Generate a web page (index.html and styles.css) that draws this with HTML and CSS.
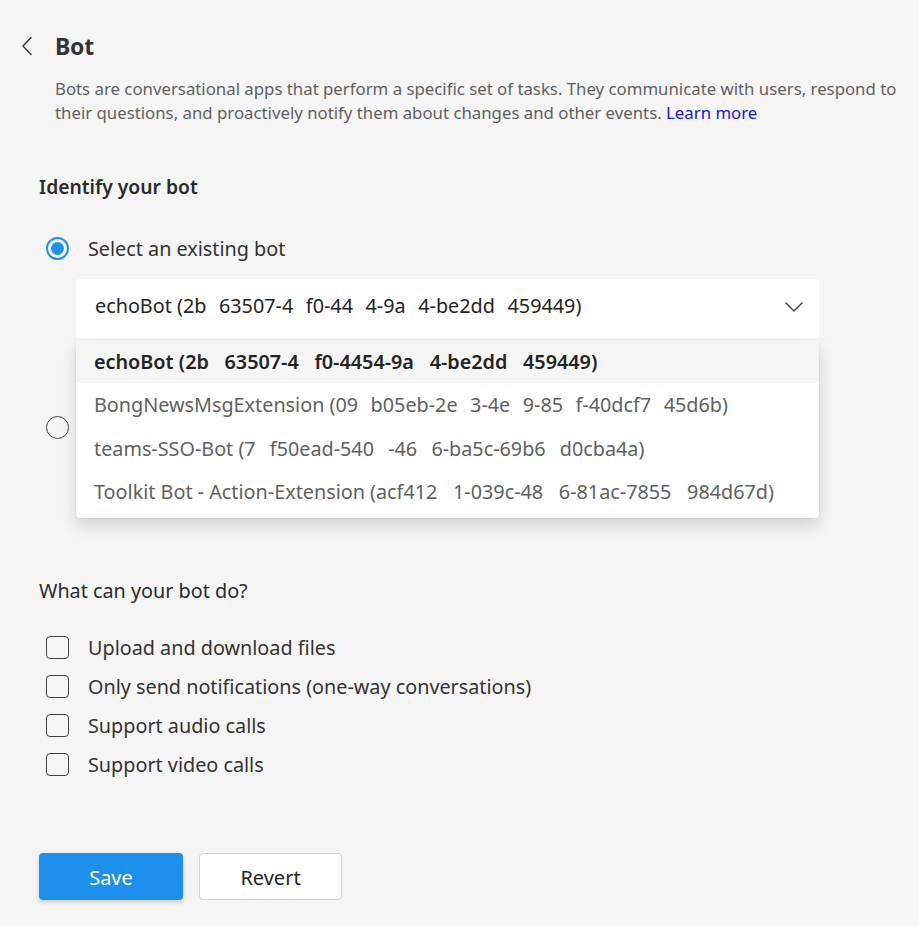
FILE: index.html
```html
<!DOCTYPE html>
<html>
<head>
<meta charset="utf-8">
<link rel="stylesheet" href="styles.css">
</head>
<body>
<div class="page">
  <header class="header">
    <button class="back" aria-label="Back">
      <svg width="12" height="20" viewBox="0 0 12 20"><path d="M10 1.5 L2 10 L10 18.5" fill="none" stroke="#424242" stroke-width="1.6" stroke-linecap="round" stroke-linejoin="round"/></svg>
    </button>
    <h1 class="title">Bot</h1>
  </header>
  <p class="desc">Bots are conversational apps that perform a specific set of tasks. They communicate with users, respond to<br>their questions, and proactively notify them about changes and other events. <a class="link" href="#">Learn more</a></p>

  <section class="section identify">
    <h2 class="h2 strong">Identify your bot</h2>
    <div class="radios">
      <div class="radio-row">
        <span class="radio checked"><span class="dot"></span></span>
        <span class="label">Select an existing bot</span>
      </div>
      <div class="select-wrap">
        <div class="select">
          <span class="select-text">echoBot (2b<span class="g13"></span>63507-4<span class="g13"></span>f0-44<span class="g13"></span>4-9a<span class="g13"></span>4-be2dd<span class="g13"></span>459449)</span>
          <svg class="chev" width="18" height="10" viewBox="0 0 18 10"><path d="M1 1 L9 9 L17 1" fill="none" stroke="#424242" stroke-width="1.4" stroke-linecap="round" stroke-linejoin="round"/></svg>
        </div>
        <ul class="menu">
          <li class="item active">echoBot (2b<span class="g16"></span>63507-4<span class="g16"></span>f0-4454-9a<span class="g16"></span>4-be2dd<span class="g16"></span>459449)</li>
          <li class="item">BongNewsMsgExtension (09<span class="g12"></span>b05eb-2e<span class="g12"></span>3-4e<span class="g12"></span>9-85<span class="g12"></span>f-40dcf7<span class="g12"></span>45d6b)</li>
          <li class="item">teams-SSO-Bot (7<span class="g14"></span>f50ead-540<span class="g14"></span>-46<span class="g14"></span>6-ba5c-69b6<span class="g14"></span>d0cba4a)</li>
          <li class="item">Toolkit Bot - Action-Extension (acf412<span class="g16"></span>1-039c-48<span class="g16"></span>6-81ac-7855<span class="g16"></span>984d67d)</li>
        </ul>
      </div>
      <div class="radio-row second">
        <span class="radio"></span>
      </div>
    </div>
  </section>

  <section class="section can">
    <h2 class="h2">What can your bot do?</h2>
    <div class="checks">
      <label class="check-row"><span class="box"></span><span class="label">Upload and download files</span></label>
      <label class="check-row"><span class="box"></span><span class="label">Only send notifications (one-way conversations)</span></label>
      <label class="check-row"><span class="box"></span><span class="label">Support audio calls</span></label>
      <label class="check-row"><span class="box"></span><span class="label">Support video calls</span></label>
    </div>
  </section>

  <div class="actions">
    <button class="btn primary">Save</button>
    <button class="btn secondary">Revert</button>
  </div>
</div>
</body>
</html>
```
FILE: styles.css
```css
* { box-sizing: border-box; }
html, body { margin: 0; padding: 0; }
body {
  background: #f5f5f5;
  font-family: "Noto Sans", "Open Sans", sans-serif;
  color: #242424;
  width: 919px;
  height: 926px;
  overflow: hidden;
}
.page { padding: 28px 0 0 0; }
.header {
  display: flex;
  align-items: center;
  height: 36px;
}
.back {
  border: 0;
  background: none;
  padding: 0;
  margin-left: 21px;
  width: 34px;
  height: 20px;
  display: flex;
  align-items: center;
}
.title {
  margin: 0;
  font-size: 23px;
  font-weight: 700;
  color: #333;
  letter-spacing: -0.2px;
}
.desc {
  margin: 13px 0 0 55px;
  font-size: 16.8px;
  line-height: 24px;
  color: #616161;
  white-space: nowrap;
}
.link { color: #1717d6; text-decoration: none; }
.section { padding-left: 39px; }
.identify { margin-top: 50px; }
.h2 {
  margin: 0;
  font-size: 19.8px;
  font-weight: 400;
  line-height: 24px;
  color: #2b2b2b;
}
.h2.strong { font-weight: 600; font-size: 19.3px; }
.radios { margin-top: 37px; padding-left: 7px; }
.radio-row { display: flex; align-items: center; height: 24px; }
.radio {
  width: 23px; height: 23px;
  border: 1.5px solid #424242;
  border-radius: 50%;
  display: flex; align-items: center; justify-content: center;
  flex: none;
}
.radio.checked { border: 2px solid #1d8fef; }
.dot { width: 13px; height: 13px; border-radius: 50%; background: #1d8fef; }
.label {
  margin-left: 19px;
  font-size: 19.8px;
  color: #333;
}
.g12, .g13, .g14, .g16 { display: inline-block; }
.g12 { width: 12.5px; }
.g13 { width: 12.6px; }
.g14 { width: 14.2px; }
.g16 { width: 15.7px; }
.select-wrap { position: relative; margin: 19px 0 0 30px; width: 743px; }
.select {
  height: 60px;
  background: #fff;
  border-radius: 4px;
  display: flex;
  align-items: center;
  justify-content: space-between;
  padding: 0 16px 0 19px;
}
.select-text { font-size: 19.8px; color: #242424; margin-top: -8px; white-space: nowrap; }
.chev { margin-top: -4px; }
.menu {
  position: absolute;
  left: 0; top: 61px;
  width: 743px;
  margin: 0;
  padding: 0 0 5px 0;
  list-style: none;
  background: #fff;
  border-radius: 0 0 4px 4px;
  box-shadow: 0 8px 16px rgba(0,0,0,0.14), 0 0 2px rgba(0,0,0,0.12);
}
.item {
  height: 43.3px;
  display: flex;
  align-items: center;
  padding-left: 18px;
  font-size: 19.8px;
  color: #616161;
  white-space: nowrap;
}
.item.active { background: #f5f5f5; color: #242424; font-weight: 600; }
.radio-row.second { margin-top: 76px; }
.can { margin-top: 140px; }
.checks { margin-top: 33px; padding-left: 7px; display: flex; flex-direction: column; gap: 16px; }
.check-row { display: flex; align-items: center; height: 23px; }
.box {
  width: 23px; height: 23px;
  border: 1.3px solid #424242;
  border-radius: 4px;
  flex: none;
}
.actions { display: flex; gap: 16px; padding-left: 39px; margin-top: 77px; }
.btn {
  height: 47px;
  border-radius: 4px;
  font-family: inherit;
  font-size: 20px;
  padding-top: 2px;
}
.primary {
  width: 144px;
  background: #1d90ee;
  color: #fff;
  border: 0;
  box-shadow: 0 2px 5px rgba(0,0,0,0.18);
}
.secondary {
  width: 143px;
  background: #fff;
  color: #242424;
  border: 1px solid #d1d1d1;
}
```
